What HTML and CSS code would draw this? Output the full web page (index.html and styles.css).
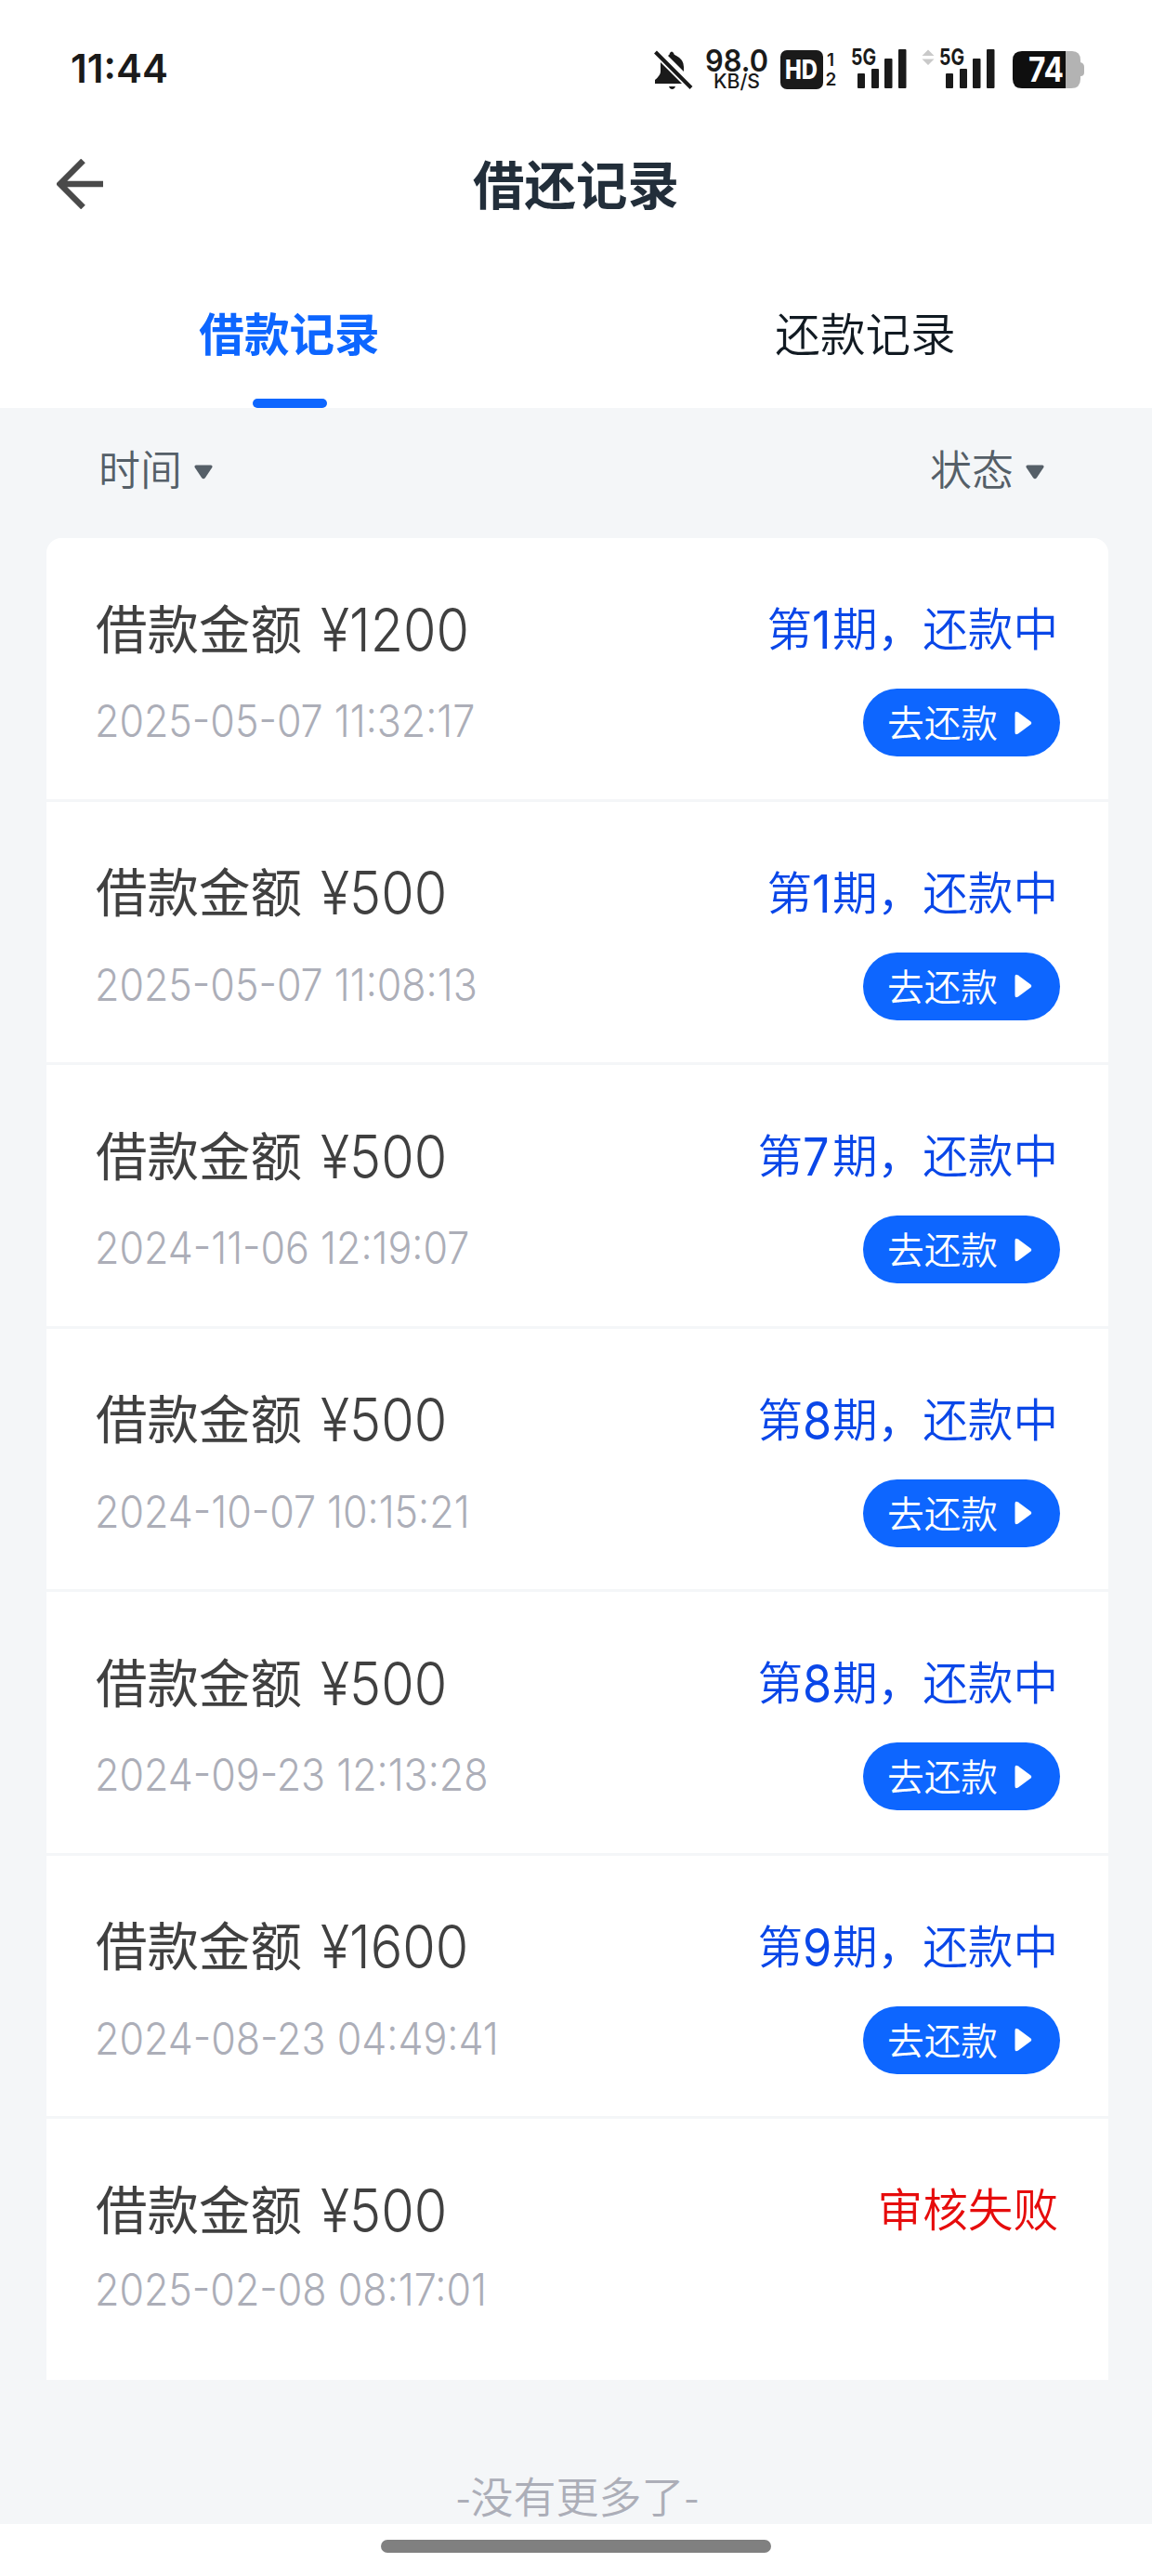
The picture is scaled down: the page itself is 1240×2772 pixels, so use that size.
FILE: index.html
```html
<!DOCTYPE html>
<html lang="zh-CN">
<head>
  <meta charset="UTF-8">
  <meta name="viewport" content="width=device-width, initial-scale=1.0">
  <title>借还记录</title>
  <link rel="stylesheet" href="styles.css">
</head>
<body>

  <div class="status-bar">
    <div class="clock">11:44</div>
    <div class="status-icons">
      <svg class="icon-bell" width="42" height="44" viewBox="0 0 42 44">
        <path d="M7 13 L30 36 H1 V32 Q7 27 7 23 Z M15 6 Q17 5 17 3 Q19 0 21 3 Q21 5 24 6 Q32 10 32 18 V23 Z M16 39 H23 Q22 42 19.5 42 Q17 42 16 39 Z" fill="#1a1a1a"/>
        <path d="M1.5 2 L40 40.5" stroke="#1a1a1a" stroke-width="4"/>
      </svg>
      <svg class="icon-speed" width="70" height="46" viewBox="0 0 70 46">
        <text x="-1" y="23" font-size="32" font-weight="600" textLength="68" lengthAdjust="spacingAndGlyphs">98.0</text>
        <text x="8" y="41" font-size="21" font-weight="500" textLength="50" lengthAdjust="spacingAndGlyphs">KB/S</text>
      </svg>
      <svg class="icon-hd" width="62" height="44" viewBox="0 0 62 44">
        <rect x="0" y="0" width="46" height="42" rx="7" fill="#1a1a1a"/>
        <text x="5" y="31" class="white" font-size="28" font-weight="800" textLength="35" lengthAdjust="spacingAndGlyphs">HD</text>
        <text x="50" y="17" font-size="19" font-weight="600">1</text>
        <text x="48.500" y="38" font-size="19" font-weight="600">2</text>
      </svg>
      <svg class="icon-signal" width="60" height="44" viewBox="0 0 60 44">
        <text x="0" y="18" font-size="24.500" font-weight="700" textLength="27" lengthAdjust="spacingAndGlyphs">5G</text>
        <g fill="#1a1a1a">
          <rect x="7" y="27" width="8" height="16" rx="1"/>
          <rect x="22" y="22" width="8" height="21" rx="1"/>
          <rect x="36" y="11" width="8.500" height="32" rx="1"/>
          <rect x="51" y="1" width="8.500" height="42" rx="1"/>
        </g>
      </svg>
      <svg class="icon-data" width="14" height="20" viewBox="0 0 14 20">
        <path d="M0.500 7 L7 0.500 L13.500 7 Z M0.500 10.500 H13.500 L7 17 Z" fill="#c9c9c9"/>
      </svg>
      <svg class="icon-signal-two" width="60" height="44" viewBox="0 0 60 44">
        <text x="0" y="18" font-size="24.500" font-weight="700" textLength="27" lengthAdjust="spacingAndGlyphs">5G</text>
        <g fill="#1a1a1a">
          <rect x="7" y="27" width="8" height="16" rx="1"/>
          <rect x="22" y="22" width="8" height="21" rx="1"/>
          <rect x="36" y="11" width="8.500" height="32" rx="1"/>
          <rect x="51" y="1" width="8.500" height="42" rx="1"/>
        </g>
      </svg>
      <svg class="icon-battery" width="78" height="40" viewBox="0 0 78 40">
        <path d="M56 0 H64 Q73 0 73 10 V12 Q77 13 77 17 V23 Q77 27 73 27 V30 Q73 40 63 40 H56 Z" fill="#b3b3b3"/>
        <path d="M10 0 H57 V40 H10 Q0 40 0 30 V10 Q0 0 10 0 Z" fill="#0f0f0f"/>
        <text x="17" y="33" class="white" font-size="37" font-weight="700" textLength="38" lengthAdjust="spacingAndGlyphs">74</text>
      </svg>
    </div>
  </div>

  <div class="header">
    <svg class="back" width="50" height="54" viewBox="0 0 50 54">
      <path d="M28.500 2 L3.500 27 L28.500 52 M4 27 H50" fill="none" stroke="#4a4a4a" stroke-width="6.500"/>
    </svg>
    <h1 class="title">借还记录</h1>
  </div>

  <div class="tabs">
    <div class="tab active">借款记录</div>
    <div class="tab">还款记录</div>
  </div>

  <div class="content">
    <div class="filters">
      <div class="filter">时间
        <svg width="20" height="16" viewBox="0 0 20 16"><path d="M2 0.500 H18 Q20.500 1 19 3.500 L12 14 Q10 16.500 8 14 L1 3.500 Q-0.500 1 2 0.500 Z" fill="#555f68"/></svg>
      </div>
      <div class="filter">状态
        <svg width="20" height="16" viewBox="0 0 20 16"><path d="M2 0.500 H18 Q20.500 1 19 3.500 L12 14 Q10 16.500 8 14 L1 3.500 Q-0.500 1 2 0.500 Z" fill="#555f68"/></svg>
      </div>
    </div>

    <div class="records">
      <div class="record">
        <div class="line">
          <div class="amount">借款金额<span class="money">¥1200</span></div>
          <div class="state">第<span class="num one">1</span>期，还款中</div>
        </div>
        <div class="line second">
          <div class="date">2025-05-07 11:32:17</div>
          <button class="repay">去还款<svg width="19" height="26" viewBox="0 0 19 26"><path d="M0.500 3 Q0.500 -0.500 4 1.500 L17.500 11.500 Q19 13 17.500 14.500 L4 24.500 Q0.500 26.500 0.500 23 Z" fill="#fff"/></svg></button>
        </div>
      </div>

      <div class="record">
        <div class="line">
          <div class="amount">借款金额<span class="money">¥500</span></div>
          <div class="state">第<span class="num one">1</span>期，还款中</div>
        </div>
        <div class="line second">
          <div class="date">2025-05-07 11:08:13</div>
          <button class="repay">去还款<svg width="19" height="26" viewBox="0 0 19 26"><path d="M0.500 3 Q0.500 -0.500 4 1.500 L17.500 11.500 Q19 13 17.500 14.500 L4 24.500 Q0.500 26.500 0.500 23 Z" fill="#fff"/></svg></button>
        </div>
      </div>

      <div class="record">
        <div class="line">
          <div class="amount">借款金额<span class="money">¥500</span></div>
          <div class="state">第<span class="num">7</span>期，还款中</div>
        </div>
        <div class="line second">
          <div class="date">2024-11-06 12:19:07</div>
          <button class="repay">去还款<svg width="19" height="26" viewBox="0 0 19 26"><path d="M0.500 3 Q0.500 -0.500 4 1.500 L17.500 11.500 Q19 13 17.500 14.500 L4 24.500 Q0.500 26.500 0.500 23 Z" fill="#fff"/></svg></button>
        </div>
      </div>

      <div class="record">
        <div class="line">
          <div class="amount">借款金额<span class="money">¥500</span></div>
          <div class="state">第<span class="num">8</span>期，还款中</div>
        </div>
        <div class="line second">
          <div class="date">2024-10-07 10:15:21</div>
          <button class="repay">去还款<svg width="19" height="26" viewBox="0 0 19 26"><path d="M0.500 3 Q0.500 -0.500 4 1.500 L17.500 11.500 Q19 13 17.500 14.500 L4 24.500 Q0.500 26.500 0.500 23 Z" fill="#fff"/></svg></button>
        </div>
      </div>

      <div class="record">
        <div class="line">
          <div class="amount">借款金额<span class="money">¥500</span></div>
          <div class="state">第<span class="num">8</span>期，还款中</div>
        </div>
        <div class="line second">
          <div class="date">2024-09-23 12:13:28</div>
          <button class="repay">去还款<svg width="19" height="26" viewBox="0 0 19 26"><path d="M0.500 3 Q0.500 -0.500 4 1.500 L17.500 11.500 Q19 13 17.500 14.500 L4 24.500 Q0.500 26.500 0.500 23 Z" fill="#fff"/></svg></button>
        </div>
      </div>

      <div class="record">
        <div class="line">
          <div class="amount">借款金额<span class="money">¥1600</span></div>
          <div class="state">第<span class="num">9</span>期，还款中</div>
        </div>
        <div class="line second">
          <div class="date">2024-08-23 04:49:41</div>
          <button class="repay">去还款<svg width="19" height="26" viewBox="0 0 19 26"><path d="M0.500 3 Q0.500 -0.500 4 1.500 L17.500 11.500 Q19 13 17.500 14.500 L4 24.500 Q0.500 26.500 0.500 23 Z" fill="#fff"/></svg></button>
        </div>
      </div>

      <div class="record">
        <div class="line">
          <div class="amount">借款金额<span class="money">¥500</span></div>
          <div class="state failed">审核失败</div>
        </div>
        <div class="line second short">
          <div class="date">2025-02-08 08:17:01</div>
        </div>
      </div>
    </div>

    <p class="no-more">-没有更多了-</p>
  </div>

  <div class="home-area">
    <div class="home-bar"></div>
  </div>

</body>
</html>
```
FILE: styles.css
```css
* {
  box-sizing: border-box;
}

body {
  margin: 0;
  font-family: "Noto Sans CJK SC", sans-serif;
  background-color: #fff;
  color: #1a1a1a;
  height: 2772px;
  overflow: hidden;
}

/* Status bar */
.status-bar {
  height: 140px;
  padding: 53px 72px 0 76px;
  display: flex;
  justify-content: space-between;
  align-items: flex-start;
}

.clock {
  font-family: Inter, sans-serif;
  font-size: 42px;
  font-weight: 600;
  line-height: 42px;
}

.status-icons {
  display: flex;
  align-items: flex-start;
}

.status-icons svg {
  display: block;
  flex-shrink: 0;
  overflow: visible;
}

.status-icons text {
  font-family: Inter, sans-serif;
  fill: #1a1a1a;
}

.status-icons .white {
  fill: #fff;
}

.icon-bell {
  margin-top: 1px;
  margin-right: 14px;
}

.icon-speed {
  margin-top: 1px;
  margin-right: 10px;
}

.icon-hd {
  margin-top: 1px;
  margin-right: 14px;
}

.icon-signal {
  margin-top: -1px;
  margin-right: 16px;
}

.icon-data {
  margin-right: 5px;
}

.icon-signal-two {
  margin-top: -1px;
  margin-right: 19px;
}

.icon-battery {
  margin-top: 2px;
}

/* Header */
.header {
  height: 120px;
  display: grid;
  grid-template-columns: 111px 1fr 111px;
  align-items: center;
}

.back {
  margin-left: 61px;
  margin-top: -5px;
}

.title {
  margin: -8px 0 0;
  font-size: 55.5px;
  line-height: 80px;
  font-weight: 700;
  text-align: center;
  color: #222e3a;
}

/* Tabs */
.tabs {
  height: 179px;
  display: grid;
  grid-template-columns: 1fr 1fr;
}

.tab {
  display: flex;
  flex-direction: column;
  align-items: center;
  justify-content: space-between;
  padding-top: 61px;
  padding-left: 3px;
  font-size: 48.6px;
  font-weight: 350;
  line-height: 72px;
  color: #111a22;
}

.tab.active {
  color: #0d66ff;
  font-weight: 700;
}

.tab.active::after {
  content: "";
  width: 80px;
  height: 10px;
  border-radius: 5px;
  background-color: #0d66ff;
}

/* List */
.content {
  height: 2277px;
  padding: 0 47px 0 50px;
  background-color: #f4f6f8;
}

.filters {
  height: 140px;
  padding: 0 69px 10px 56px;
  display: flex;
  justify-content: space-between;
  align-items: center;
}

.filter {
  display: flex;
  align-items: center;
  gap: 13px;
  font-size: 45px;
  font-weight: 350;
  line-height: 66px;
  color: #555f68;
}

.filter svg {
  margin-top: 7px;
}

.records {
  background-color: #fff;
  border-radius: 16px 16px 0 0;
}

.record {
  height: 283.5px;
  padding: 56px 52px 0 53px;
  border-bottom: 3px solid #f4f6f8;
}

.record:last-child {
  height: 281px;
  border-bottom: none;
}

.line {
  height: 78px;
  display: flex;
  justify-content: space-between;
  align-items: center;
}

.amount {
  font-size: 55.500px;
  font-weight: 400;
  line-height: 78px;
  color: #404040;
}

.money {
  display: inline-block;
  margin-left: 20px;
  font-family: Inter, sans-serif;
  font-size: 65px;
  font-weight: 350;
  line-height: 78px;
  transform: translateY(3px) scaleX(0.885);
  transform-origin: left;
}

.state {
  padding-right: 2px;
  font-size: 48.6px;
  font-weight: 350;
  line-height: 78px;
  color: #0a47e8;
}

.num {
  display: inline-block;
  width: 32px;
  font-family: Inter, sans-serif;
  font-size: 56px;
  font-weight: 380;
  line-height: 60px;
  transform: translateY(3px) scaleX(0.9);
  transform-origin: left;
}

.num.one {
  width: 22px;
}

.failed {
  color: #e60c0c;
}

.second {
  height: 73px;
  margin-top: 28px;
}

.second.short {
  margin-top: 15px;
}

.date {
  font-family: Inter, sans-serif;
  font-size: 48px;
  font-weight: 330;
  line-height: 60px;
  margin-top: -3px;
  margin-left: -1px;
  color: #acaeb8;
  transform: scaleX(0.896);
  transform-origin: left;
  white-space: nowrap;
}

.repay {
  width: 212px;
  height: 73px;
  padding: 0 0 3px 26px;
  display: flex;
  align-items: center;
  gap: 18px;
  border: none;
  border-radius: 37px;
  background-color: #0d66ff;
  color: #fff;
  font-family: inherit;
  font-size: 39.700px;
  font-weight: 350;
  line-height: 60px;
}

.repay svg {
  margin-top: 3px;
}

.no-more {
  margin: 93px 0 0;
  font-size: 46px;
  font-weight: 350;
  line-height: 60px;
  text-align: center;
  color: #acaeb8;
}

/* Gesture bar */
.home-area {
  height: 56px;
  padding-top: 17px;
}

.home-bar {
  width: 420px;
  height: 14px;
  margin: 0 auto;
  border-radius: 7px;
  background-color: #808080;
}
```
